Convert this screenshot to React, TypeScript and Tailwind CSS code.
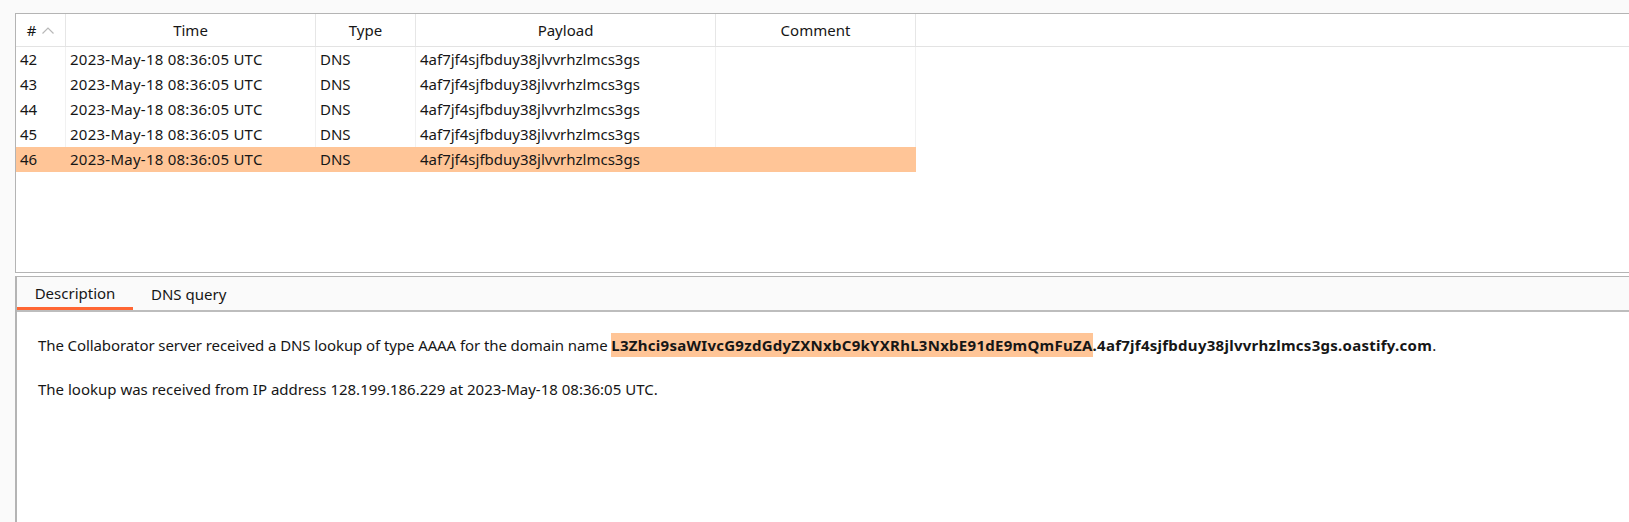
import React from "react";

const cols = [
  { key: "id", label: "#", w: "w-[50px]", extra: "" },
  { key: "time", label: "Time", w: "w-[250px]", extra: "tracking-[0.25px]" },
  { key: "type", label: "Type", w: "w-[100px]", extra: "" },
  { key: "payload", label: "Payload", w: "w-[300px]", extra: "" },
  { key: "comment", label: "Comment", w: "w-[200px]", extra: "" },
] as const;

const rows = [42, 43, 44, 45, 46].map((n) => ({
  id: String(n),
  time: "2023-May-18 08:36:05 UTC",
  type: "DNS",
  payload: "4af7jf4sjfbduy38jlvvrhzlmcs3gs",
  comment: "",
}));

const selected = "46";

function SortUp() {
  return (
    <svg width="12" height="7" viewBox="0 0 12 7" className="ml-[6px]">
      <path d="M0.5 6.5 L6 1 L11.5 6.5" fill="none" stroke="#b8b8b8" strokeWidth="1.2" />
    </svg>
  );
}

export default function App() {
  return (
    <div
      className="flex h-[522px] w-full flex-col overflow-hidden bg-[#fafafa] pl-[15px] pt-[13px] text-[15px] text-[#161616]"
      style={{ fontFamily: '"Noto Sans", "Open Sans", sans-serif' }}
    >
      {/* interactions table */}
      <div className="flex h-[260px] shrink-0 flex-col border-y border-l border-[#b4b4b4] bg-white">
        <div className="flex h-[33px] shrink-0 border-b border-[#e3e3e3]">
          {cols.map((c) => (
            <div
              key={c.key}
              className={`${c.w} flex shrink-0 items-center justify-center border-r border-[#e6e6e6]`}
            >
              {c.label}
              {c.key === "id" && <SortUp />}
            </div>
          ))}
          <div className="flex-1" />
        </div>
        {rows.map((r) => (
          <div
            key={r.id}
            className={`flex h-[25px] w-[900px] shrink-0 ${r.id === selected ? "bg-[#ffc597]" : ""}`}
          >
            {cols.map((c) => (
              <div
                key={c.key}
                className={`${c.w} ${c.extra} flex shrink-0 items-center whitespace-nowrap px-1 ${
                  r.id === selected ? "" : "border-r border-[#f1f1f1]"
                }`}
              >
                {r[c.key]}
              </div>
            ))}
          </div>
        ))}
      </div>

      <div className="h-[3px] shrink-0 bg-white" />

      {/* detail panel */}
      <div className="flex flex-1 flex-col border-l-2 border-t border-[#b4b4b4] bg-white">
        <div className="flex h-[35px] shrink-0 items-stretch border-b-2 border-[#bdbdbd] bg-[#fafafa]">
          <div className="flex w-[116px] items-center justify-center border-b-[3px] border-[#ff6633] pt-[3px]">
            Description
          </div>
          <div className="flex items-center pl-[18px] pt-[1px]">DNS query</div>
        </div>
        <div className="flex flex-col gap-[20px] pl-[21px] pt-[21px]">
          <div className="whitespace-nowrap leading-[24px] tracking-[-0.09px]">
            The Collaborator server received a DNS lookup of type AAAA for the domain name{" "}
            <span className="inline-block bg-[#ffc597] font-bold tracking-[0.27px]">
              L3Zhci9saWIvcG9zdGdyZXNxbC9kYXRhL3NxbE91dE9mQmFuZA
            </span>
            <span className="font-bold tracking-[0.27px]">.4af7jf4sjfbduy38jlvvrhzlmcs3gs.oastify.com</span>.
          </div>
          <div className="leading-[24px]">
            The lookup was received from IP address 128.199.186.229 at 2023-May-18 08:36:05 UTC.
          </div>
        </div>
      </div>
    </div>
  );
}
